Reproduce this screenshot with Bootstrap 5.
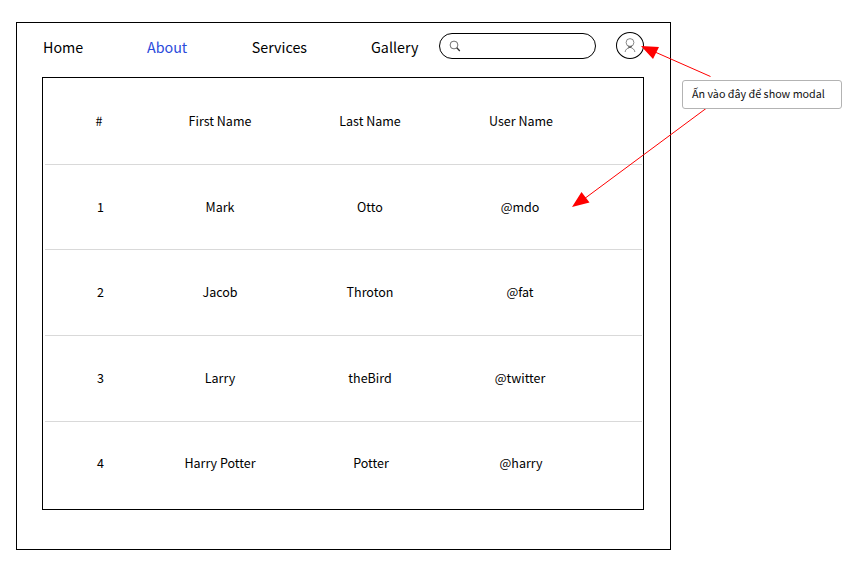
<!DOCTYPE html>
<html lang="vi">
<head>
<meta charset="utf-8">
<title>Table wireframe</title>
<link href="https://cdn.jsdelivr.net/npm/bootstrap@5.3.0/dist/css/bootstrap.min.css" rel="stylesheet">
<style>
body{font-family:"Noto Sans CJK SC","Noto Sans",sans-serif;color:#000;background:#fff;overflow:hidden}
.frame{width:655px;height:528px;margin:22px 0 0 16px;border:1px solid #000;padding:0 26px 0 25px}
.topbar{height:54px;padding:0}
.topbar .nav-link{color:#000;font-size:14.3px;line-height:24px;padding:0;margin-left:1px}
.topbar .nav-link.active{color:#2b4bdb}
.topbar .nav-item:nth-child(1){width:104px}
.topbar .nav-item:nth-child(2){width:104.7px}
.topbar .nav-item:nth-child(3){width:119.3px}
.topbar .nav-item:nth-child(4){width:69px}
.topbar .navbar-nav{padding-top:12px}
.search{width:157px;height:26px;margin-top:10px;border:1px solid #000;border-radius:13px;padding-left:9px}
.search input{font-size:13px;min-width:0}
.search svg{flex:none}
.avatar{width:28px;height:27px;margin-top:9px;border:1px solid #000;border-radius:50%}
.table-box{width:602px;height:433px;border:1px solid #000;padding:1px 1px 0 2px}
.people{--bs-table-bg:transparent;table-layout:fixed;width:597px;font-size:12.5px;line-height:20px;border-collapse:separate;border-spacing:0}
.people>:not(caption)>*>*{height:85.65px;padding:0;font-weight:400;color:#000;vertical-align:middle;border-bottom:1px solid #d9d9d9}
.people>tbody>tr:nth-child(even)>*{padding-bottom:2px}
.people>tbody>tr:last-child>*{border-bottom:0}
.people>tbody>tr:last-child>td:nth-child(3){padding-left:2px}
.people>tbody>tr:not(:last-child)>td:nth-child(4){padding-right:2px}
.people thead th:first-child{padding-right:3px}
.note{left:682px;top:80px;width:160px;height:29px;border:1px solid #b3b3b3;border-radius:3px;padding-left:9px;font-size:10.75px;line-height:26px;color:#111;white-space:nowrap}
.arrows{left:0;top:0;pointer-events:none}
</style>
<script src="https://cdn.jsdelivr.net/npm/bootstrap@5.3.0/dist/js/bootstrap.bundle.min.js"></script>
</head>
<body>
<main class="frame">
  <nav class="topbar navbar-expand d-flex align-items-start">
    <ul class="navbar-nav">
      <li class="nav-item"><a class="nav-link" href="#">Home</a></li>
      <li class="nav-item"><a class="nav-link active" href="#">About</a></li>
      <li class="nav-item"><a class="nav-link" href="#">Services</a></li>
      <li class="nav-item"><a class="nav-link" href="#">Gallery</a></li>
    </ul>
    <form class="search d-flex align-items-center">
      <svg width="12" height="12" viewBox="0 0 12 12" fill="none" stroke="#333"><circle cx="5" cy="5" r="3.9" stroke-width=".7"/><path d="M7.8 7.8 10.8 11" stroke-width="1.3"/></svg>
      <input class="form-control border-0 bg-transparent p-0 ms-2 shadow-none" type="search" aria-label="Search">
    </form>
    <a class="avatar d-flex align-items-center justify-content-center ms-auto" href="#" aria-label="Profile">
      <svg width="13" height="17" viewBox="0 0 13 17" fill="none" stroke="#555" stroke-width=".7"><circle cx="6" cy="5.5" r="3.9"/><path d="M4.3 9 6 10.8 7.7 9M4.3 9.900H7.7M4.100 11.200 7.900 9.200M1.100 15C1.500 12.400 3.300 11 6 10.300 8.700 11 10.500 12.400 10.900 15"/></svg>
    </a>
  </nav>
  <section class="table-box">
    <table class="people table align-middle text-center mb-0">
      <colgroup><col style="width:111px"><col style="width:128px"><col style="width:172px"><col style="width:130px"><col></colgroup>
      <thead><tr><th>#</th><th>First Name</th><th>Last Name</th><th>User Name</th><th></th></tr></thead>
      <tbody>
        <tr><td>1</td><td>Mark</td><td>Otto</td><td>@mdo</td><td></td></tr>
        <tr><td>2</td><td>Jacob</td><td>Throton</td><td>@fat</td><td></td></tr>
        <tr><td>3</td><td>Larry</td><td>theBird</td><td>@twitter</td><td></td></tr>
        <tr><td>4</td><td>Harry Potter</td><td>Potter</td><td>@harry</td><td></td></tr>
      </tbody>
    </table>
  </section>
</main>
<svg class="arrows position-absolute" width="849" height="568" fill="red" stroke="red" stroke-width="1">
  <path d="M710.5 76.5 655 52M706 108.500 584 199" fill="none"/>
  <path d="M641 46 659 47 653 59ZM572 207 581.500 192 589.500 202.500Z" stroke="none"/>
</svg>
<div class="note position-absolute bg-white">Ấn vào đây để show modal</div>
</body>
</html>
